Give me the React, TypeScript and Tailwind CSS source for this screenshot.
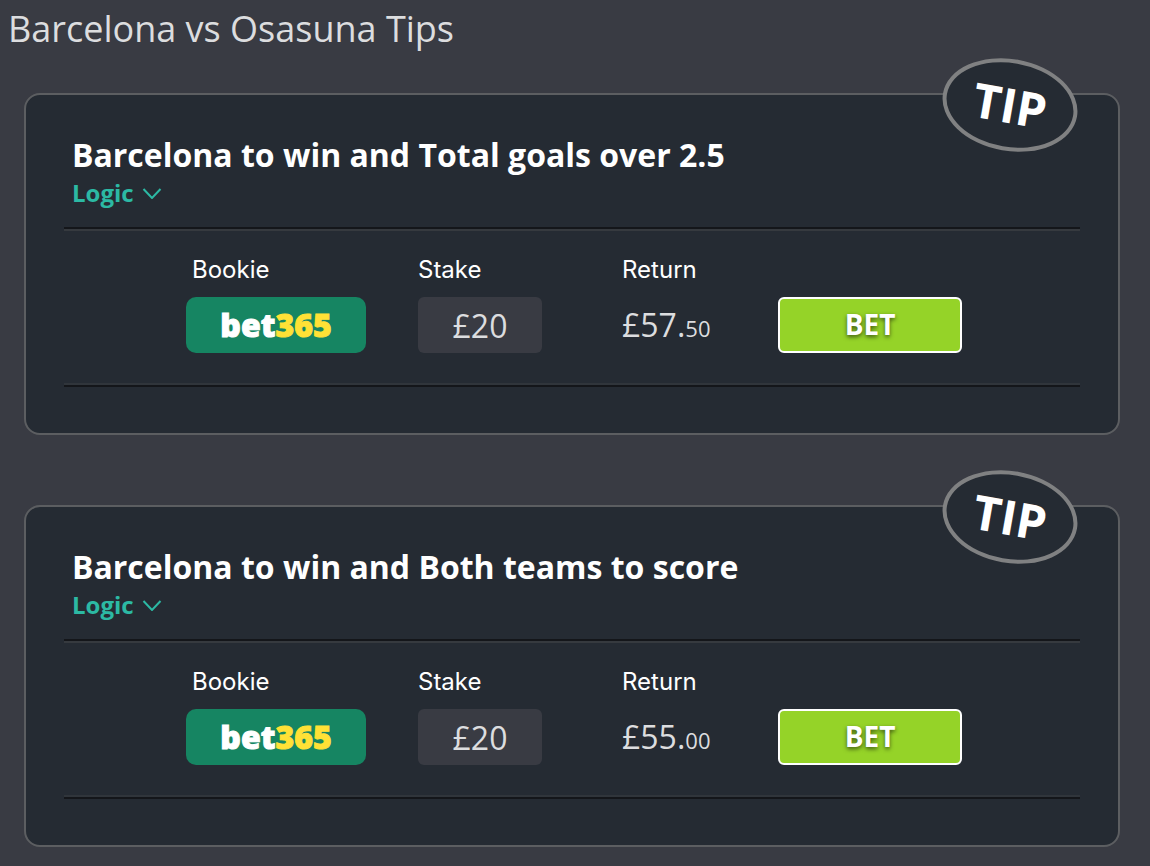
import { useState } from "react";

interface Tip {
  id: string;
  title: string;
  stake: string;
  pounds: string;
  pence: string;
}

const TIPS: Tip[] = [
  {
    id: "win-over",
    title: "Barcelona to win and Total goals over 2.5",
    stake: "£20",
    pounds: "£57.",
    pence: "50",
  },
  {
    id: "win-btts",
    title: "Barcelona to win and Both teams to score",
    stake: "£20",
    pounds: "£55.",
    pence: "00",
  },
];

const labelClass = "font-['Inter',sans-serif] text-2xl leading-8 text-white";

function TipBadge() {
  return (
    <div className="absolute -top-9 right-10 flex h-[92px] w-[136px] rotate-10 items-center justify-center rounded-[50%] border-4 border-[#808182] bg-[#252b33] text-5xl font-bold text-white">
      TIP
    </div>
  );
}

function TipCard({ tip }: { tip: Tip }) {
  const [stake, setStake] = useState(tip.stake);

  return (
    <article className="relative rounded-2xl border-2 border-[#5c5e61] bg-[#252b33] px-[38px] pt-9 pb-[46px]">
      <TipBadge />

      <div className="px-2 pb-5">
        <h2 className="text-[32px] leading-[48px] font-bold text-white">{tip.title}</h2>
        <button
          type="button"
          className="flex items-center gap-2 text-2xl leading-7 font-bold text-[#2cb9a4]"
        >
          Logic
          <svg width="20" height="12" viewBox="0 0 20 12" fill="none" stroke="currentColor" strokeWidth="2">
            <path d="M1.5 2 L10 11 L18.5 2" />
          </svg>
        </button>
      </div>

      <div className="border-y-2 border-[#14161a]">
        <div className="flex items-end justify-center border-y-2 border-t-[#363a3f] border-b-[#30353b] pt-[23px] pb-[30px] pl-1">
          <div className="mr-[52px] flex w-[180px] flex-col gap-[11px]">
            <span className={`${labelClass} pl-1.5`}>Bookie</span>
            <a
              href="#bet365"
              className="flex h-14 items-center justify-center rounded-[10px] bg-[#168562] text-[32px] font-extrabold text-white [-webkit-text-stroke:1px]"
            >
              bet<span className="text-[#ffe136]">365</span>
            </a>
          </div>

          <div className="mr-20 flex w-[124px] flex-col gap-[11px]">
            <label htmlFor={`stake-${tip.id}`} className={labelClass}>
              Stake
            </label>
            <input
              id={`stake-${tip.id}`}
              value={stake}
              onChange={(e) => setStake(e.target.value)}
              className="h-14 w-full rounded-md bg-[#393b43] text-center text-[32px] text-[#dcdddf] outline-none"
            />
          </div>

          <div className="flex w-[156px] flex-col gap-[11px]">
            <span className={labelClass}>Return</span>
            <div className="h-14 text-[32px] leading-[56px] text-[#dcdddf]">
              {tip.pounds}
              <span className="text-[22px]">{tip.pence}</span>
            </div>
          </div>

          <a
            href="#bet"
            className="flex h-14 w-[184px] items-center justify-center rounded-md border-2 border-white bg-[#95d328] pb-0.5 text-[28px] font-bold text-white text-shadow-[0_2px_4px_rgb(0_0_0/0.6)]"
          >
            BET
          </a>
        </div>
      </div>
    </article>
  );
}

export default function App() {
  return (
    <main className="min-h-screen bg-[#393b43] pr-[30px] pb-5 pl-6 font-['Open_Sans',sans-serif]">
      <h1 className="-ml-4 pt-1 text-4xl leading-[49px] text-[#dcdddf]">Barcelona vs Osasuna Tips</h1>
      <div className="mt-10 flex flex-col gap-[70px]">
        {TIPS.map((tip) => (
          <TipCard key={tip.id} tip={tip} />
        ))}
      </div>
    </main>
  );
}
